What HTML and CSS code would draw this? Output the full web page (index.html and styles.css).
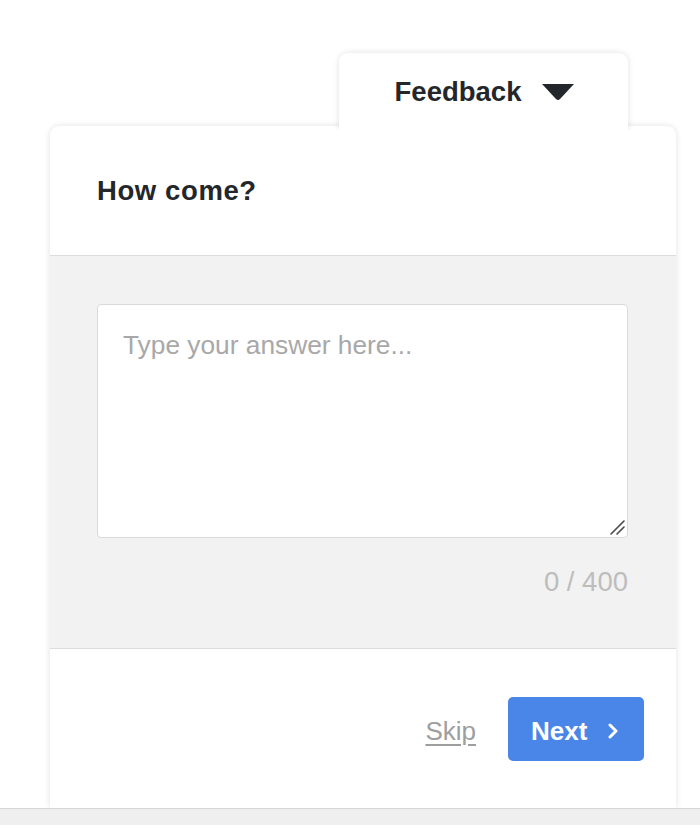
FILE: index.html
```html
<!DOCTYPE html>
<html lang="en">
<head>
<meta charset="utf-8">
<title>Feedback</title>
<link rel="stylesheet" href="styles.css">
</head>
<body>
<div class="page">
  <div class="widget">
    <div class="tab">
      <span class="tab-label">Feedback</span>
      <svg class="tab-caret" width="32" height="16" viewBox="0 0 32 16"><path d="M0 0 H32 L18 15 Q16 17 14 15 Z" fill="#23272b"/></svg>
    </div>
    <div class="card">
      <div class="card-header">
        <h2 class="question">How come?</h2>
      </div>
      <div class="card-body">
        <div class="answer-wrap">
          <textarea class="answer" placeholder="Type your answer here..."></textarea>
          <svg class="grip" width="18" height="18" viewBox="0 0 18 18"><path d="M3 16 L16 3 M9 16 L16 9" stroke="#4a4a4a" stroke-width="1.6" stroke-linecap="round"/></svg>
        </div>
        <div class="counter">0 / 400</div>
      </div>
      <div class="card-footer">
        <a class="skip" href="#">Skip</a>
        <button class="next" type="button">Next
          <svg class="chev" width="12" height="16" viewBox="0 0 12 16"><path d="M3 2 L9 8 L3 14" fill="none" stroke="#fff" stroke-width="3" stroke-linecap="round" stroke-linejoin="round"/></svg>
        </button>
      </div>
    </div>
  </div>
</div>
<div class="bottom-bar"></div>
</body>
</html>
```

FILE: styles.css
```css
html, body {
  margin: 0;
  padding: 0;
  background: #ffffff;
  font-family: "Liberation Sans", Arial, Helvetica, sans-serif;
  color: #23272b;
}

.page {
  padding: 53px 0 0 50px;
}

.widget {
  width: 626px;
  display: flex;
  flex-direction: column;
}

.tab {
  position: relative;
  z-index: 2;
  align-self: flex-start;
  margin-left: 289px;
  width: 289px;
  height: 77px;
  margin-bottom: -4px;
  background: #ffffff;
  border-radius: 9px 9px 0 0;
  box-shadow: 0 0 6px rgba(0, 0, 0, 0.12);
  clip-path: inset(-12px -12px 0 -12px);
  display: flex;
  align-items: flex-start;
  justify-content: center;
  gap: 21px;
  padding: 23px 0 0 2px;
  box-sizing: border-box;
}

.tab-label {
  font-size: 27.5px;
  font-weight: 700;
  line-height: 32px;
}

.tab-caret {
  margin-top: 8px;
}

.card {
  position: relative;
  z-index: 1;
  background: #ffffff;
  border-radius: 9px 9px 0 0;
  box-shadow: 0 0 6px rgba(0, 0, 0, 0.12);
  display: flex;
  flex-direction: column;
}

.card-header {
  height: 129px;
  display: flex;
  align-items: center;
  padding: 0 47px;
  border-bottom: 1px solid #dcdcdc;
}

.question {
  margin: 0;
  font-size: 27.5px;
  font-weight: 700;
  line-height: 32px;
  letter-spacing: 0.6px;
}

.card-body {
  background: #f2f2f2;
  padding: 48px 48px 51px 47px;
  display: flex;
  flex-direction: column;
  border-bottom: 1px solid #dcdcdc;
}

.answer-wrap {
  position: relative;
}

.answer {
  display: block;
  width: 100%;
  height: 234px;
  box-sizing: border-box;
  border: 1px solid #dadada;
  border-radius: 4px;
  background: #ffffff;
  padding: 24px 25px;
  font-family: "Liberation Sans", Arial, Helvetica, sans-serif;
  font-size: 26.3px;
  line-height: 32px;
  color: #23272b;
  resize: none;
  outline: none;
}

.answer::placeholder {
  color: #a8a8a8;
}

.grip {
  position: absolute;
  right: 2px;
  bottom: 2px;
}

.counter {
  margin-top: 29px;
  text-align: right;
  font-size: 27.5px;
  line-height: 30px;
  color: #bdbdbd;
}

.card-footer {
  height: 159px;
  box-sizing: border-box;
  padding: 0 32px 0 0;
  display: flex;
  align-items: center;
  justify-content: flex-end;
  gap: 32px;
}

.skip {
  margin-top: 5px;
  font-size: 26px;
  color: #9e9e9e;
  text-decoration: underline;
  text-underline-offset: 4px;
  text-decoration-thickness: 2px;
}

.next {
  width: 136px;
  height: 64px;
  border: none;
  border-radius: 5px;
  background: #4a86e8;
  color: #ffffff;
  font-family: "Liberation Sans", Arial, Helvetica, sans-serif;
  font-size: 26px;
  font-weight: 700;
  display: flex;
  align-items: center;
  padding: 5px 0 0 23px;
  gap: 20px;
  box-sizing: border-box;
}

.chev {
  display: block;
}

.bottom-bar {
  position: relative;
  z-index: 3;
  height: 17px;
  background: #efefef;
  border-top: 1px solid #d6d6d6;
}
```
